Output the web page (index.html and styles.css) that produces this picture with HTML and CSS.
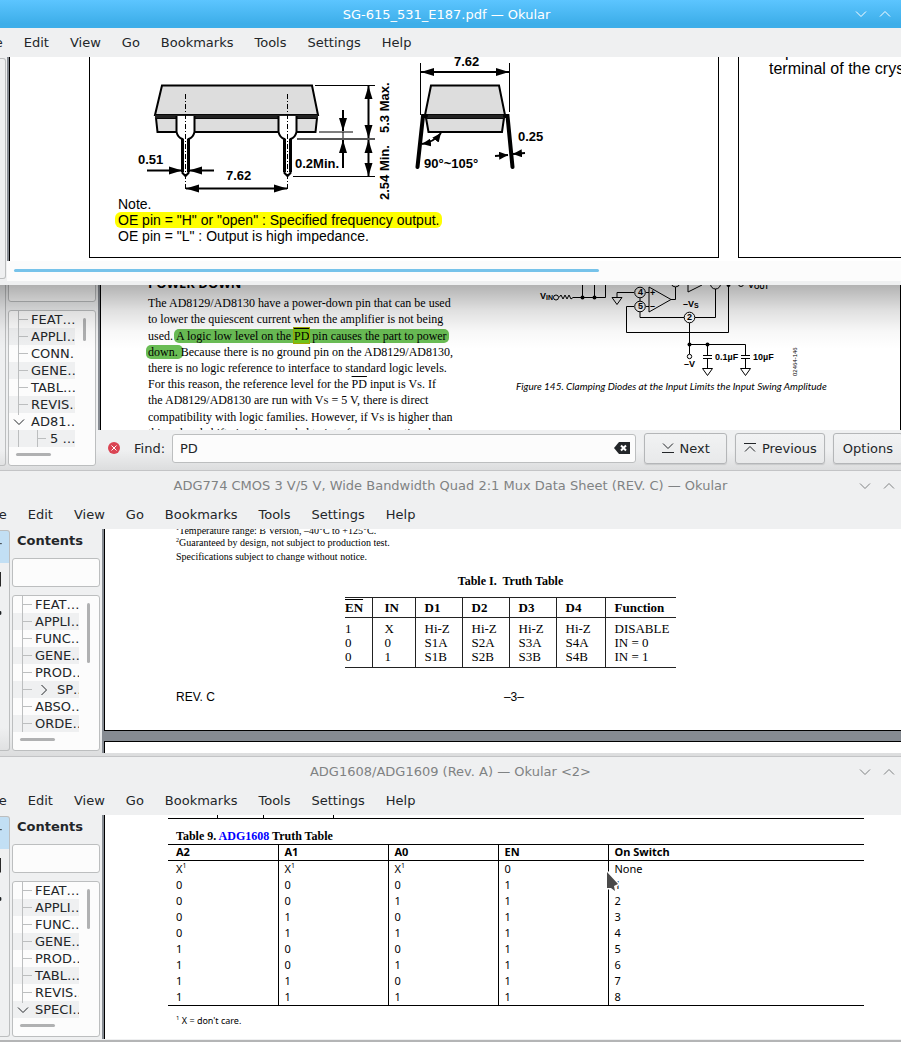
FILE: index.html
```html
<!DOCTYPE html>
<html lang="en">
<head>
<meta charset="utf-8">
<title>Okular windows</title>
<link rel="stylesheet" href="styles.css">
</head>
<body>
<svg class="defs" width="0" height="0" aria-hidden="true">
  <defs>
    <marker id="arrow" viewBox="0 0 13 9" refX="13" refY="4.5" markerWidth="13" markerHeight="9" markerUnits="userSpaceOnUse" orient="auto-start-reverse"><path d="M0 0.5 13 4.5 0 8.5z"/></marker>
    <marker id="arrow-s" viewBox="0 0 9 8" refX="9" refY="4" markerWidth="9" markerHeight="8" markerUnits="userSpaceOnUse" orient="auto-start-reverse"><path d="M0 0 9 4 0 8z"/></marker>
    <symbol id="down" viewBox="0 0 12 8"><path d="M1 1.500 6 6.500 11 1.500" fill="none" stroke="currentColor"/></symbol>
    <symbol id="up" viewBox="0 0 12 8"><path d="M1 6.500 6 1.500 11 6.500" fill="none" stroke="currentColor"/></symbol>
    <symbol id="strip" viewBox="0 0 10 100"><path d="M0 8.500h2M0 84v3h1v-3z" stroke="#232629"/><path d="M0 40h1v16H0z" fill="#111"/></symbol>
  </defs>
</svg>

<section class="window active">
  <header class="titlebar">
    <h1 class="title">SG-615_531_E187.pdf — Okular</h1>
    <div class="controls">
      <button class="control" aria-label="Minimize"><svg width="12" height="8"><use href="#down"/></svg></button>
      <button class="control" aria-label="Maximize"><svg width="12" height="8"><use href="#up"/></svg></button>
      <button class="control" aria-label="Close"><svg width="14" height="14" viewBox="0 0 14 14"><circle cx="7" cy="7" r="6.500" fill="none" stroke="currentColor"/></svg></button>
    </div>
  </header>
  <nav class="menubar menubar-near">
    <button>File</button><button>Edit</button><button>View</button><button>Go</button><button>Bookmarks</button><button>Tools</button><button>Settings</button><button>Help</button>
  </nav>
  <div class="body">
    <div class="strip strip-thin"></div>
    <div class="viewer">
      <div class="spread">
        <div class="sheet-left">
          <svg class="package" width="628" height="138" viewBox="90 57 628 138" fill="none" stroke="#000" stroke-width="2">
            <g fill="#ddd">
              <path d="M162 85.500H312L318 115H155z"/>
              <path d="M156 118H317L315.500 132H157.500z"/>
              <path d="M431 85.500H499L505 115H425z"/>
              <path d="M426 118H504L502 132H428.500z"/>
            </g>
            <path d="M155 116.500H318M425 116.500H505" stroke="#222" stroke-width="3.500"/>
            <g fill="#fff">
              <path d="M176.500 116V132Q178 138 182.500 139V173L185.500 176 188.500 173V139Q193 138 194.500 132V116"/>
              <path d="M278.500 116V132Q280 138 284.500 139V173L287.500 176 290.500 173V139Q295 138 296.500 132V116"/>
            </g>
            <path d="M182.500 139V172M188.500 139V172M284.500 139V172M290.500 139V172" stroke-width="3"/>
            <path d="M185.500 94V191M287.500 94V191" stroke-width="1" stroke-dasharray="5 2 1 2"/>
            <path d="M315 85.500H375M319 132H353M293 176.500H375M420.500 63V115M509.500 63V112M343 132V140" stroke-width="1"/>
            <path d="M297 139H375" stroke="#555"/>
            <g stroke-width="2">
              <path d="M368.500 86V138" marker-start="url(#arrow)" marker-end="url(#arrow)"/>
              <path d="M368.500 140V176" marker-start="url(#arrow)" marker-end="url(#arrow)"/>
              <path d="M343 110V131" marker-end="url(#arrow)"/>
              <path d="M343 168V140" marker-end="url(#arrow)"/>
              <path d="M147 170.500H182" marker-end="url(#arrow)"/>
              <path d="M214 170.500H189" marker-end="url(#arrow)"/>
              <path d="M186 188.500H287" marker-start="url(#arrow)" marker-end="url(#arrow)"/>
              <path d="M421 72H509" marker-start="url(#arrow)" marker-end="url(#arrow)"/>
              <path d="M441 133Q434 142 422 144" marker-start="url(#arrow-s)" marker-end="url(#arrow-s)"/>
              <path d="M495 156 508 155" marker-end="url(#arrow-s)"/>
              <path d="M525 153 513 154" marker-end="url(#arrow-s)"/>
            </g>
            <path d="M426 116H423L417.500 167M505 116H507.500L512.500 167" stroke-width="4" stroke-linecap="round"/>
            <g class="dim">
              <text x="138" y="164">0.51</text>
              <text x="226" y="180">7.62</text>
              <text x="295" y="168">0.2Min.</text>
              <text x="454" y="66">7.62</text>
              <text x="424" y="168">90°~105°</text>
              <text x="518" y="141">0.25</text>
              <text transform="translate(389 133) rotate(-90)">5.3 Max.</text>
              <text transform="translate(389 200) rotate(-90)">2.54 Min.</text>
            </g>
          </svg>
          <p class="note">Note.<br><mark>OE pin = "H" or "open" : Specified frequency output.</mark><br>OE pin = "L" : Output is high impedance.</p>
        </div>
        <div class="sheet-right"><p>is p<br>terminal of the crys</p></div>
      </div>
      <div class="hbar"><div class="hbar-thumb"></div></div>
    </div>
  </div>
</section>

<section class="window searching">
  <div class="body">
    <div class="strip strip-thin"></div>
    <aside class="sidebar">
      <input class="filter" aria-label="Filter contents">
      <div class="tree">
        <ul>
          <li><span>FEAT…</span></li><li><span>APPLI…</span></li><li><span>CONN…</span></li><li><span>GENE…</span></li><li><span>TABL…</span></li><li><span>REVIS…</span></li>
          <li class="open"><svg width="12" height="8"><use href="#down"/></svg><span>AD81…</span></li>
          <li class="child"><span>5 …</span></li>
        </ul>
        <i class="vthumb vthumb-s"></i><i class="hthumb"></i>
      </div>
    </aside>
    <main class="reader">
      <div class="page amp">
        <div class="prose">
          <h2>POWER DOWN</h2>
          <span class="line">The AD8129/AD8130 have a power-down pin that can be used</span>
          <span class="line tall">to lower the quiescent current when the amplifier is not being</span>
          <span class="line">used. <mark>A logic low level on the <b class="hit">PD</b> pin causes the part to power</mark></span>
          <span class="line"><mark>down. </mark>Because there is no ground pin on the AD8129/AD8130,</span>
          <span class="line">there is no logic reference to interface to standard logic levels.</span>
          <span class="line">For this reason, the reference level for the <span class="over">PD</span> input is V<small>S</small>. If</span>
          <span class="line tall">the AD8129/AD8130 are run with V<small>S</small> = 5 V, there is direct</span>
          <span class="line">compatibility with logic families. However, if V<small>S</small> is higher than</span>
          <span class="line">this, a level shift circuit is needed to interface conventional</span>
        </div>
        <figure>
          <svg width="310" height="94" viewBox="516 285 310 94" fill="none" stroke="#000">
            <path d="M559 297.500 561 295 563 299 565 295 567 299 569 295 571 299 573 297.500H605.500V285M582.500 285V297M594.500 285V297M617 297V292.500H634M646 292.500H649M646 306.500H649M634 306.500H626.500V332.500H728.500V285M640 298V301M671 299.500H675.500V285M688 285V292L702 285M689.500 323V354M689.500 344.500H745.500V355M707.500 344V355M703 355.500H712M703 358.500H712M741 355.500H750M741 358.500H750M707.500 359V368M745.500 359V368M715.500 289V317.500H695"/>
            <path d="M640 312V317.500H684"/>
            <path d="M649 287V312L671 299.500zM612 297.500H622L617 304.500zM702.500 368.500H712.500L707.500 375.500zM740.500 368.500H750.500L745.500 375.500z"/>
            <circle cx="556" cy="297.500" r="2.500"/><circle cx="689.500" cy="356.500" r="2.200"/><circle cx="741" cy="284" r="2.500"/>
            <g fill="#fff"><circle cx="640" cy="292.500" r="5.300"/><circle cx="640" cy="306.500" r="5.300"/><circle cx="689.500" cy="317.500" r="5.300"/><circle cx="675.500" cy="283" r="4"/><circle cx="715.500" cy="284" r="5"/></g>
            <g fill="#000" stroke="none"><circle cx="582.500" cy="297.500" r="2"/><circle cx="594.500" cy="297.500" r="2"/><circle cx="689.500" cy="344.500" r="2"/><circle cx="707.500" cy="344.500" r="2"/><circle cx="728.500" cy="285" r="2"/></g>
            <g class="label">
              <text x="540" y="299">V<tspan dy="1">IN</tspan></text>
              <text x="638" y="295">4</text><text x="638" y="309">5</text><text x="687" y="320">2</text>
              <text x="650" y="296">+</text><text x="650" y="309">–</text>
              <text x="683" y="307">–V<tspan dy="1">S</tspan></text>
              <text x="684" y="367">–V</text>
              <text x="715" y="360">0.1µF</text><text x="753" y="360">10µF</text>
              <text x="748" y="288">V<tspan dy="1">OUT</tspan></text>
              <text class="tiny" transform="translate(797 376) rotate(-90)">02464-146</text>
            </g>
          </svg>
          <figcaption>Figure 145. Clamping Diodes at the Input Limits the Input Swing Amplitude</figcaption>
        </figure>
      </div>
      <form class="findbar">
        <button type="button" class="closer" aria-label="Close find bar"><svg width="12" height="12" viewBox="0 0 12 12"><circle cx="6" cy="6" r="6" fill="#da4453"/><path d="M3.500 3.500 8.500 8.500M8.500 3.500 3.500 8.500" stroke="#fff"/></svg></button>
        <label for="find">Find:</label>
        <div class="field"><input id="find" value="PD"><button type="button" aria-label="Clear"><svg width="16" height="12" viewBox="0 0 16 12"><path d="M0 6 5 0H16V12H5z" fill="#232629"/><path d="M7 3.500 12 8.500M12 3.500 7 8.500" stroke="#fff" stroke-width="2"/></svg></button></div>
        <button type="button" class="push"><svg width="14" height="12" viewBox="0 0 14 12" fill="none" stroke="#232629"><path d="M2 1.500 7 6.500 12 1.500M1 10.500H13"/></svg>Next</button>
        <button type="button" class="push"><svg width="14" height="12" viewBox="0 0 14 12" fill="none" stroke="#232629"><path d="M1 1.500H13M2 9.500 7 4.500 12 9.500"/></svg>Previous</button>
        <button type="button" class="push push-cut">Options</button>
      </form>
    </main>
  </div>
</section>

<section class="window">
  <header class="titlebar">
    <h1 class="title">ADG774 CMOS 3 V/5 V, Wide Bandwidth Quad 2:1 Mux Data Sheet (REV. C) — Okular</h1>
    <div class="controls">
      <button class="control" aria-label="Minimize"><svg width="12" height="8"><use href="#down"/></svg></button>
      <button class="control" aria-label="Maximize"><svg width="12" height="8"><use href="#up"/></svg></button>
    </div>
  </header>
  <nav class="menubar">
    <button>File</button><button>Edit</button><button>View</button><button>Go</button><button>Bookmarks</button><button>Tools</button><button>Settings</button><button>Help</button>
  </nav>
  <div class="body">
    <div class="strip"><svg width="9" height="100"><use href="#strip"/></svg></div>
    <aside class="sidebar">
      <h2>Contents</h2>
      <input class="filter" aria-label="Filter contents">
      <div class="tree">
        <ul>
          <li><span>FEAT…</span></li><li><span>APPLI…</span></li><li><span>FUNC…</span></li><li><span>GENE…</span></li><li><span>PROD…</span></li>
          <li class="closed"><svg width="8" height="12" viewBox="0 0 8 12"><path d="M1.500 1 6.500 6 1.500 11" fill="none" stroke="currentColor"/></svg><span>SP…</span></li>
          <li><span>ABSO…</span></li><li><span>ORDE…</span></li>
        </ul>
        <i class="vthumb vthumb-l"></i><i class="hthumb"></i>
      </div>
    </aside>
    <main class="reader">
      <div class="page mux">
        <p class="spec"><sup>1</sup>Temperature range: B Version, –40°C to +125°C.<br><sup>2</sup>Guaranteed by design, not subject to production test.</p>
        <p class="spec last">Specifications subject to change without notice.</p>
        <table class="truth">
          <caption>Table I.&nbsp; Truth Table</caption>
          <colgroup><col class="c1"><col class="c2"><col class="c3"><col class="c3"><col class="c3"><col class="c4"><col class="c5"></colgroup>
          <thead><tr><th><span class="over">EN</span></th><th>IN</th><th>D1</th><th>D2</th><th>D3</th><th>D4</th><th>Function</th></tr></thead>
          <tbody>
            <tr><td>1</td><td>X</td><td>Hi-Z</td><td>Hi-Z</td><td>Hi-Z</td><td>Hi-Z</td><td>DISABLE</td></tr>
            <tr><td>0</td><td>0</td><td>S1A</td><td>S2A</td><td>S3A</td><td>S4A</td><td>IN = 0</td></tr>
            <tr><td>0</td><td>1</td><td>S1B</td><td>S2B</td><td>S3B</td><td>S4B</td><td>IN = 1</td></tr>
          </tbody>
        </table>
        <footer class="folio"><span>REV. C</span><span>–3–</span></footer>
      </div>
      <div class="page next-page"></div>
    </main>
  </div>
</section>

<section class="window final">
  <header class="titlebar">
    <h1 class="title">ADG1608/ADG1609 (Rev. A) — Okular &lt;2&gt;</h1>
    <div class="controls">
      <button class="control" aria-label="Minimize"><svg width="12" height="8"><use href="#down"/></svg></button>
      <button class="control" aria-label="Maximize"><svg width="12" height="8"><use href="#up"/></svg></button>
    </div>
  </header>
  <nav class="menubar">
    <button>File</button><button>Edit</button><button>View</button><button>Go</button><button>Bookmarks</button><button>Tools</button><button>Settings</button><button>Help</button>
  </nav>
  <div class="body">
    <div class="strip"><svg width="9" height="100"><use href="#strip"/></svg></div>
    <aside class="sidebar">
      <h2>Contents</h2>
      <input class="filter" aria-label="Filter contents">
      <div class="tree">
        <ul>
          <li><span>FEAT…</span></li><li><span>APPLI…</span></li><li><span>FUNC…</span></li><li><span>GENE…</span></li><li><span>PROD…</span></li><li><span>TABL…</span></li><li><span>REVIS…</span></li>
          <li class="open"><svg width="12" height="8"><use href="#down"/></svg><span>SPECI…</span></li>
        </ul>
        <i class="vthumb vthumb-m"></i><i class="hthumb"></i>
      </div>
    </aside>
    <main class="reader">
      <div class="page switch">
        <div class="table-end"><i></i><i></i><i></i></div>
        <table class="channels">
          <caption>Table 9. <a href="#adg1608">ADG1608</a> Truth Table</caption>
          <colgroup><col class="n"><col class="n"><col class="n"><col class="n"><col></colgroup>
          <thead><tr><th>A2</th><th>A1</th><th>A0</th><th>EN</th><th>On Switch</th></tr></thead>
          <tbody>
            <tr><td>X<sup>1</sup></td><td>X<sup>1</sup></td><td>X<sup>1</sup></td><td>0</td><td>None</td></tr>
            <tr><td>0</td><td>0</td><td>0</td><td>1</td><td class="pointed">1<svg class="pointer" width="14" height="22" viewBox="0 0 14 22"><path d="M1 1 12 13 8 15 9 20 5 17H1z" fill="#4a4a4a" stroke="#fff" stroke-width="3" paint-order="stroke"/></svg></td></tr>
            <tr><td>0</td><td>0</td><td>1</td><td>1</td><td>2</td></tr>
            <tr><td>0</td><td>1</td><td>0</td><td>1</td><td>3</td></tr>
            <tr><td>0</td><td>1</td><td>1</td><td>1</td><td>4</td></tr>
            <tr><td>1</td><td>0</td><td>0</td><td>1</td><td>5</td></tr>
            <tr><td>1</td><td>0</td><td>1</td><td>1</td><td>6</td></tr>
            <tr><td>1</td><td>1</td><td>0</td><td>1</td><td>7</td></tr>
            <tr><td>1</td><td>1</td><td>1</td><td>1</td><td>8</td></tr>
          </tbody>
        </table>
        <p class="footnote"><sup>1</sup> X = don't care.</p>
      </div>
    </main>
  </div>
</section>
</body>
</html>
```

FILE: styles.css
```css
* { box-sizing: border-box; }
body { margin: 0; background: #eff0f1; color: #232629; font: 13px/17px "DejaVu Sans", sans-serif; overflow: hidden; }
h1, h2, p, ul, figure { margin: 0; padding: 0; }
button, input { font: inherit; color: inherit; padding: 0; border: 0; background: none; }
svg { display: block; flex: none; }
.defs { position: absolute; }

/* window frame */
.window { position: relative; overflow: hidden; background: linear-gradient(#eff0f1 90%, #dcddde); border-top: 1px solid #c3c4c6; padding-bottom: 3px; }
.titlebar { position: relative; display: flex; align-items: center; justify-content: center; height: 29px; color: #7f8283; }
.title { font: inherit; white-space: nowrap; }
.controls { position: absolute; right: 6px; top: 0; bottom: 0; display: flex; align-items: center; gap: 12px; }
.control { display: flex; }
.window.active { border: 0; padding-bottom: 4px; background: #eff0f1; }
.active .titlebar { height: 28px; padding-right: 8px; color: #fff; background: linear-gradient(#5cc5ff, #3daee9 85%); }
.active .controls { right: -16px; }
.menubar { display: flex; gap: 21px; height: 29px; margin-left: -15px; align-items: center; }
.menubar-near { margin-left: -19px; }
.body { display: flex; }

/* sidebar */
.strip { flex: none; width: 10px; margin: 1px 0 2px; border: 1px solid #bcbebf; border-left: 0; border-radius: 0 3px 3px 0; background: linear-gradient(#c2dff4 32px, transparent 32px); }
.strip-thin { width: 6px; background: none; }
.sidebar { flex: none; display: flex; flex-direction: column; width: 92px; padding: 3px 2px 2px; }
.sidebar h2 { font-size: 13px; line-height: 17px; padding-left: 5px; margin-bottom: 9px; }
.filter { flex: none; display: block; width: 88px; height: 29px; border: 1px solid #bcbebf; border-radius: 3px; background: #fcfcfc; }
.tree { position: relative; width: 88px; height: 156px; margin-top: 8px; border: 1px solid #bcbebf; border-radius: 3px; background: #fcfcfc; }
.tree ul { list-style: none; width: 66px; overflow: hidden; }
.tree li { position: relative; display: flex; align-items: center; height: 17px; padding-left: 22px; white-space: nowrap; background: linear-gradient(#bcbebf, #bcbebf) 9px 0 / 1px 17px no-repeat, linear-gradient(#bcbebf, #bcbebf) 10px 8px / 9px 1px no-repeat; }
.tree li:nth-child(even) { background-color: #eff0f1; }
.tree .open { padding-left: 4px; gap: 6px; background-size: 1px 2px, 0 0; }
.tree .closed { padding-left: 27px; gap: 9px; }
.tree .child { padding-left: 41px; background-position: 9px 0, 28px 8px; }
.tree .child::before { content: ""; position: absolute; left: 28px; top: 0; width: 1px; height: 17px; background: #bcbebf; }
.vthumb, .hthumb { position: absolute; border-radius: 2px; background: #b0b1b2; }
.vthumb { right: 9px; top: 7px; width: 3px; }
.vthumb-s { height: 23px; }
.vthumb-m { height: 40px; }
.vthumb-l { height: 60px; }
.hthumb { left: 7px; bottom: 9px; width: 35px; height: 3px; }
.reader { flex: 1; min-width: 0; margin-left: 2px; }
.page { border-left: 1px solid #000; background: #fff; color: #000; box-shadow: -2px 0 #868b92; overflow: hidden; }

/* oscillator data sheet */
.viewer { flex: 1; min-width: 0; margin-left: 1px; }
.spread { display: flex; gap: 19px; margin-left: 2px; padding: 0 0 3px 79px; overflow: hidden; border-left: 1px solid #000; background: #fff; box-shadow: -2px 0 #868b92; color: #000; }
.sheet-left { flex: none; width: 630px; border: 1px solid #000; border-top: 0; font-family: "Liberation Sans", sans-serif; }
.package { overflow: visible; }
.sheet-right { flex: 1; min-width: 0; border: solid #000; border-width: 0 0 1px 1px; padding-left: 30px; font: 16px/17px "Liberation Sans", sans-serif; white-space: nowrap; overflow: hidden; }
.sheet-right p { margin-top: -14px; }
.note { padding: 1px 28px 13px; font-size: 14px; line-height: 16px; white-space: nowrap; }
.note mark { margin: 0 -3px; padding: 0 3px; border-radius: 6px; background: #ff0; line-height: 13px; }
.dim text { fill: #000; stroke: none; font: bold 13px "Liberation Sans", sans-serif; }
.hbar { height: 20px; padding: 8px 0 0 7px; background: #fcfcfc; }
.hbar-thumb { width: 66%; height: 3px; border-radius: 2px; background: #77c3ea; }

/* amplifier data sheet with find bar */
.window.searching { border: 0; padding-bottom: 4px; background: linear-gradient(#eff0f1 165px, #dcddde); }
.searching::before { content: ""; position: absolute; inset: 0 0 auto; height: 64px; z-index: 1; background: linear-gradient(rgba(0,0,0,.3), rgba(0,0,0,.12) 40%, rgba(0,0,0,.03) 72%, transparent); pointer-events: none; }
.searching .strip { margin: -2px 0 0; }
.searching .sidebar { padding-top: 0; padding-bottom: 0; }
.searching .filter { margin-top: -12px; }
.amp { display: flex; justify-content: space-between; height: 145px; padding: 0 74px 0 47px; border-right: 1px solid #000; }
.prose { font: 12px/16px "Liberation Serif", serif; white-space: nowrap; }
.prose h2 { height: 10px; font: bold 13px/16px "Open Sans", sans-serif; margin-top: -10px; margin-bottom: 10px; }
.line { display: block; height: 16px; }
.tall { height: 17px; }
.prose mark { background: #6abd55; padding: 0 2px; margin: 0 -2px; border-radius: 5px; color: #000; line-height: 12px; }
.hit { font-weight: normal; background: #71c31a; outline: 1px solid #a2a800; border-top: 1px solid #000; }
.over { text-decoration: overline; }
.prose small { font-size: 9px; }
figure { width: 310px; }
figcaption { font: italic 10px/14px Lato, sans-serif; white-space: nowrap; }
.label text { fill: #000; stroke: none; font: bold 9px "Liberation Sans", sans-serif; }
.label tspan { font-size: 7px; }
.label .tiny { font: 6px "Liberation Sans", sans-serif; }
.findbar { display: flex; align-items: center; height: 36px; padding-left: 8px; margin-right: -2px; }
.closer { margin-right: 14px; }
.findbar label { margin-right: 7px; }
.field { flex: 1; display: flex; align-items: center; height: 29px; margin-right: 8px; padding: 0 5px 0 7px; border: 1px solid #bcbebf; border-radius: 3px; background: #fcfcfc; }
.field input { flex: 1; min-width: 0; outline: 0; }
.push { display: flex; align-items: center; gap: 5px; height: 31px; margin-right: 8px; padding: 0 16px; border: 1px solid #b4b6b8; border-radius: 3px; background: linear-gradient(#f1f2f3, #e8e9ea); box-shadow: 0 1px 1px #c8c9ca; }
.push + .push { padding: 0 7px; }
.push + .push-cut { margin: 0; padding: 0 9px; }

/* multiplexer data sheet */
.mux { padding: 0 0 24px 71px; border-bottom: 1px solid #000; font-family: "Liberation Serif", serif; }
.spec { margin-top: -4px; font-size: 10px; line-height: 12px; white-space: nowrap; }
.spec sup, .footnote sup { font-size: 6px; line-height: 6px; }
.spec.last { margin-top: 1px; }
.truth { width: 331px; margin: 10px 0 0 169px; border-collapse: collapse; table-layout: fixed; font-size: 13px; line-height: 14px; border-bottom: 1px solid #222; }
.truth caption { font-weight: bold; font-size: 12px; line-height: 16px; padding-bottom: 8px; }
.c1 { width: 27px; } .c2 { width: 43px; } .c3 { width: 47px; } .c4 { width: 49px; }
.truth th, .truth td { padding: 0 0 0 9px; text-align: left; font-weight: normal; border-left: 1px solid #222; white-space: nowrap; }
.truth th { font-weight: bold; padding-top: 3px; padding-bottom: 2px; border-top: 1px solid #222; border-bottom: 1px solid #222; }
.truth tr > :first-child { padding-left: 0; border-left: 0; }
.truth tr > :nth-child(2) { padding-left: 12px; }
.truth tbody tr:first-child td { padding-top: 4px; }
.truth tbody tr:last-child td { padding-bottom: 3px; }
.folio { display: flex; gap: 289px; margin-top: 21px; font: 12px/17px "Liberation Sans", sans-serif; }
.next-page { height: 12px; margin-top: 10px; border-top: 1px solid #000; box-shadow: -2px 0 #868b92, 0 -10px #868b92, -2px -10px #868b92; }

/* switch data sheet */
.window.final { border-bottom: 2px solid #b4b5b6; padding-bottom: 1px; background: #eff0f1; }
.switch { height: 224px; padding: 0 37px 0 63px; font: 11px/16px "Noto Sans", sans-serif; }
.table-end { display: grid; grid-template-columns: 50px 46px 70px; height: 4px; border-bottom: 1px solid #000; }
.table-end i { border-right: 1px solid #000; }
.channels { width: 100%; margin-top: 9px; border-collapse: collapse; table-layout: fixed; border-bottom: 1px solid #000; }
.channels caption { padding-left: 8px; text-align: left; font: bold 12px/16px "Liberation Serif", serif; }
.channels a { color: #00f; text-decoration: none; }
.n { width: 110px; }
.channels th, .channels td { height: 16px; padding: 0 0 0 6px; text-align: left; line-height: 15px; border-left: 1px solid #000; }
.channels th { border-top: 1px solid #000; border-bottom: 1px solid #000; line-height: 13px; padding-bottom: 2px; }
.channels tr > :first-child { border-left: 0; padding-left: 8px; }
.channels tbody tr:last-child td { padding-bottom: 1px; }
.channels sup { font-size: 7px; line-height: 7px; }
.pointed { position: relative; }
.pointer { position: absolute; left: -3px; top: -6px; }
.footnote { padding: 7px 8px 0; font-size: 9px; line-height: 16px; }
```
